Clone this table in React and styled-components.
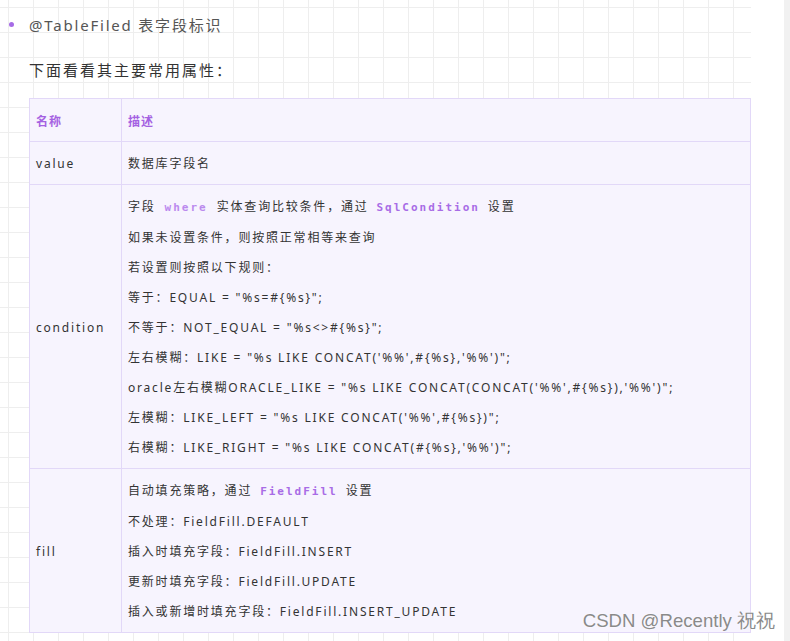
import React from "react";
import styled, { createGlobalStyle } from "styled-components";

const GlobalStyle = createGlobalStyle`
  html, body {
    margin: 0;
    padding: 0;
    background: #ffffff;
  }
  body {
    font-family: "Noto Sans", "Noto Sans CJK SC", sans-serif;
  }
`;

const Page = styled.div`
  display: flex;
  width: 790px;
  height: 641px;
  overflow: hidden;
`;

const Doc = styled.div`
  width: 751px;
  flex-shrink: 0;
  padding: 10px 0 0 0;
  box-sizing: border-box;
  background-color: #ffffff;
  background-image: linear-gradient(to right, #eeeeee 1px, transparent 1px),
    linear-gradient(to bottom, #eeeeee 1px, transparent 1px);
  background-size: 25px 25px;
  background-position: 8px 7px;
`;

const Gutter = styled.div`
  flex: 1;
  background: #ffffff;
`;

const ScrollTrack = styled.div`
  width: 6px;
  background: #f1f1f1;
`;

const ListItem = styled.div`
  display: flex;
  align-items: center;
  height: 28px;
  padding-left: 9px;
`;

const Dot = styled.span`
  width: 5px;
  height: 5px;
  border-radius: 50%;
  background: #a66be6;
  margin-right: 15px;
`;

const Text = styled.p`
  margin: 0;
  font-size: 15px;
  letter-spacing: 1.8px;
  color: ${(p) => (p.$muted ? "#555555" : "#333333")};
`;

const Para = styled(Text)`
  padding: 17px 0 0 29px;
  height: 43px;
  line-height: 30px;
  box-sizing: border-box;
  letter-spacing: 2px;
`;

const Table = styled.table`
  margin: 17px 0 0 29px;
  width: 722px;
  border-collapse: collapse;
  background: #f7f4fe;
  font-size: 12px;
  letter-spacing: 1.8px;
  color: #333333;
`;

const Th = styled.th`
  border: 1px solid #e2d8f8;
  padding: 7px 6px 5px;
  height: 30px;
  text-align: left;
  color: #a562e2;
  font-size: 12px;
  font-weight: bold;
  letter-spacing: 1px;
  width: ${(p) => p.$w || "auto"};
`;

const Td = styled.td`
  border: 1px solid #e2d8f8;
  padding: 7px 6px 5px;
  line-height: 30px;
  vertical-align: middle;
`;

const Line = styled.div`
  white-space: nowrap;
`;

const Code = styled.code`
  font-family: "DejaVu Sans Mono", "Liberation Mono", monospace;
  font-weight: bold;
  font-size: 11px;
  letter-spacing: 2px;
  color: ${(p) => (p.$light ? "#bb8aee" : "#a86ce6")};
  padding: ${(p) => (p.$wide ? "0 9px" : "0 3px")};
`;

const Watermark = styled.div`
  position: absolute;
  right: 15px;
  bottom: 7px;
  font-family: "Liberation Sans", Arial, sans-serif;
  font-size: 18.6px;
  color: #8a8a8a;
  text-shadow: 0 0 2px #ffffff;
`;

const Frame = styled.div`
  position: relative;
`;

const conditionLines = [
  "若设置则按照以下规则：",
  '等于：EQUAL = "%s=#{%s}";',
  '不等于：NOT_EQUAL = "%s<>#{%s}";',
  "左右模糊：LIKE = \"%s LIKE CONCAT('%%',#{%s},'%%')\";",
  "oracle左右模糊ORACLE_LIKE = \"%s LIKE CONCAT(CONCAT('%%',#{%s}),'%%')\";",
  "左模糊：LIKE_LEFT = \"%s LIKE CONCAT('%%',#{%s})\";",
  "右模糊：LIKE_RIGHT = \"%s LIKE CONCAT(#{%s},'%%')\";",
];

const fillLines = [
  "不处理：FieldFill.DEFAULT",
  "插入时填充字段：FieldFill.INSERT",
  "更新时填充字段：FieldFill.UPDATE",
  "插入或新增时填充字段：FieldFill.INSERT_UPDATE",
];

export default function App() {
  return (
    <Frame>
      <GlobalStyle />
      <Page>
        <Doc>
          <ListItem>
            <Dot />
            <Text $muted>@TableFiled 表字段标识</Text>
          </ListItem>
          <Para>下面看看其主要常用属性：</Para>
          <Table>
            <thead>
              <tr>
                <Th $w="79px">名称</Th>
                <Th>描述</Th>
              </tr>
            </thead>
            <tbody>
              <tr>
                <Td>value</Td>
                <Td>数据库字段名</Td>
              </tr>
              <tr>
                <Td>condition</Td>
                <Td>
                  <Line>
                    字段<Code $light $wide>where</Code>实体查询比较条件，通过{" "}
                    <Code>SqlCondition</Code> 设置
                  </Line>
                  <Line>如果未设置条件，则按照正常相等来查询</Line>
                  {conditionLines.map((l) => (
                    <Line key={l}>{l}</Line>
                  ))}
                </Td>
              </tr>
              <tr>
                <Td>fill</Td>
                <Td>
                  <Line>
                    自动填充策略，通过 <Code>FieldFill</Code> 设置
                  </Line>
                  {fillLines.map((l) => (
                    <Line key={l}>{l}</Line>
                  ))}
                </Td>
              </tr>
            </tbody>
          </Table>
        </Doc>
        <Gutter />
        <ScrollTrack />
      </Page>
      <Watermark>CSDN @Recently 祝祝</Watermark>
    </Frame>
  );
}
